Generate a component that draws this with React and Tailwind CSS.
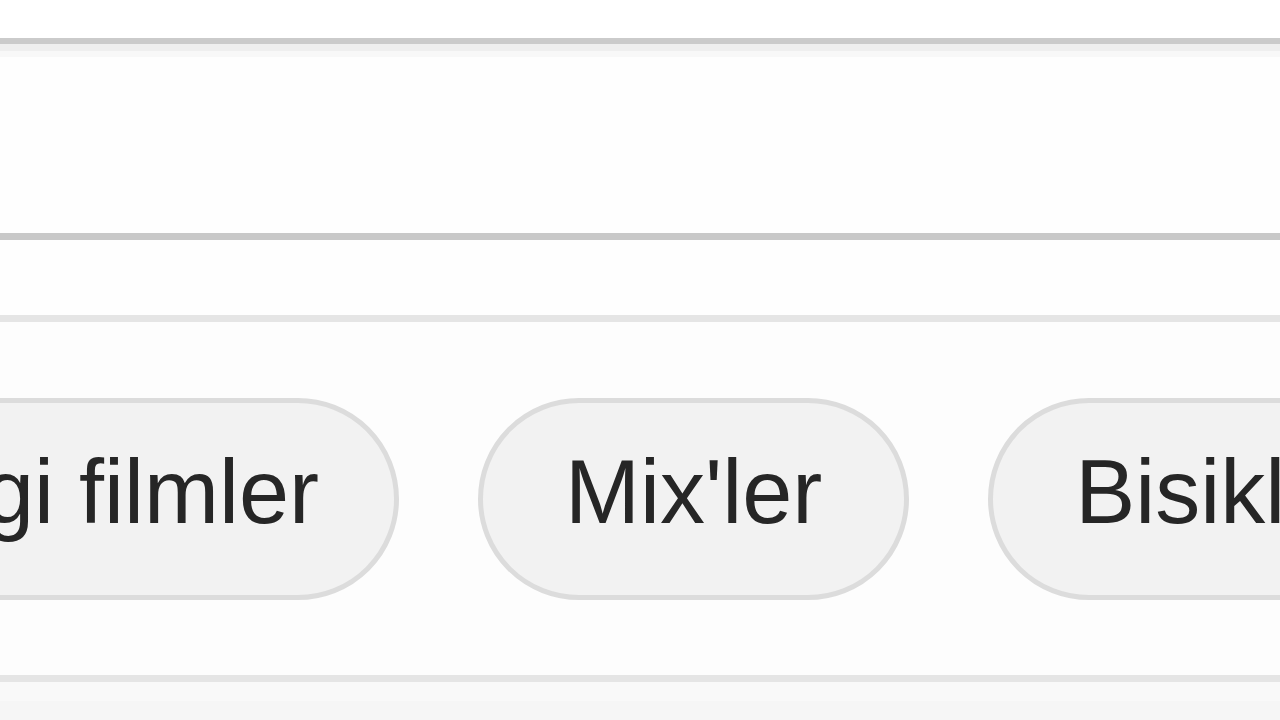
export default function App() {
  const chip =
    "shrink-0 h-[202px] flex items-center rounded-full border-[5px] border-[#dcdcdc] bg-[#f2f2f2] text-[90px] leading-none text-[#262626] whitespace-nowrap pb-[14px]";
  return (
    <div
      className="w-[1280px] h-[720px] overflow-hidden bg-white flex flex-col"
      style={{ fontFamily: '"Liberation Sans", Arial, sans-serif' }}
    >
      <div className="h-[38px] shrink-0 bg-white" />
      <div className="h-[6px] shrink-0 bg-[#cbcbcb]" />
      <div className="h-[7px] shrink-0 bg-[#efefef]" />
      <div className="h-[6px] shrink-0 bg-[#f8f8f8]" />
      <div className="h-[176px] shrink-0 bg-[#fefefe]" />
      <div className="h-[7px] shrink-0 bg-[#c8c8c8]" />
      <div className="h-[75px] shrink-0 bg-[#fefefe]" />
      <div className="h-[7px] shrink-0 bg-[#e5e5e5]" />
      <div className="h-[353px] shrink-0 bg-[#fdfdfd] flex items-start pt-[76px]">
        <div className="flex gap-[79px] items-center ml-[-131px]">
          <div className={chip + " pl-[110px] pr-[75px]"}>gi filmler</div>
          <div className={chip + " px-[82px]"}>Mix'ler</div>
          <div className={chip + " px-[82px]"}>Bisiklet</div>
        </div>
      </div>
      <div className="h-[7px] shrink-0 bg-[#e5e5e5]" />
      <div className="h-[19px] shrink-0 bg-[#f9f9f9]" />
      <div className="h-[19px] shrink-0 bg-[#f6f6f6]" />
    </div>
  );
}
